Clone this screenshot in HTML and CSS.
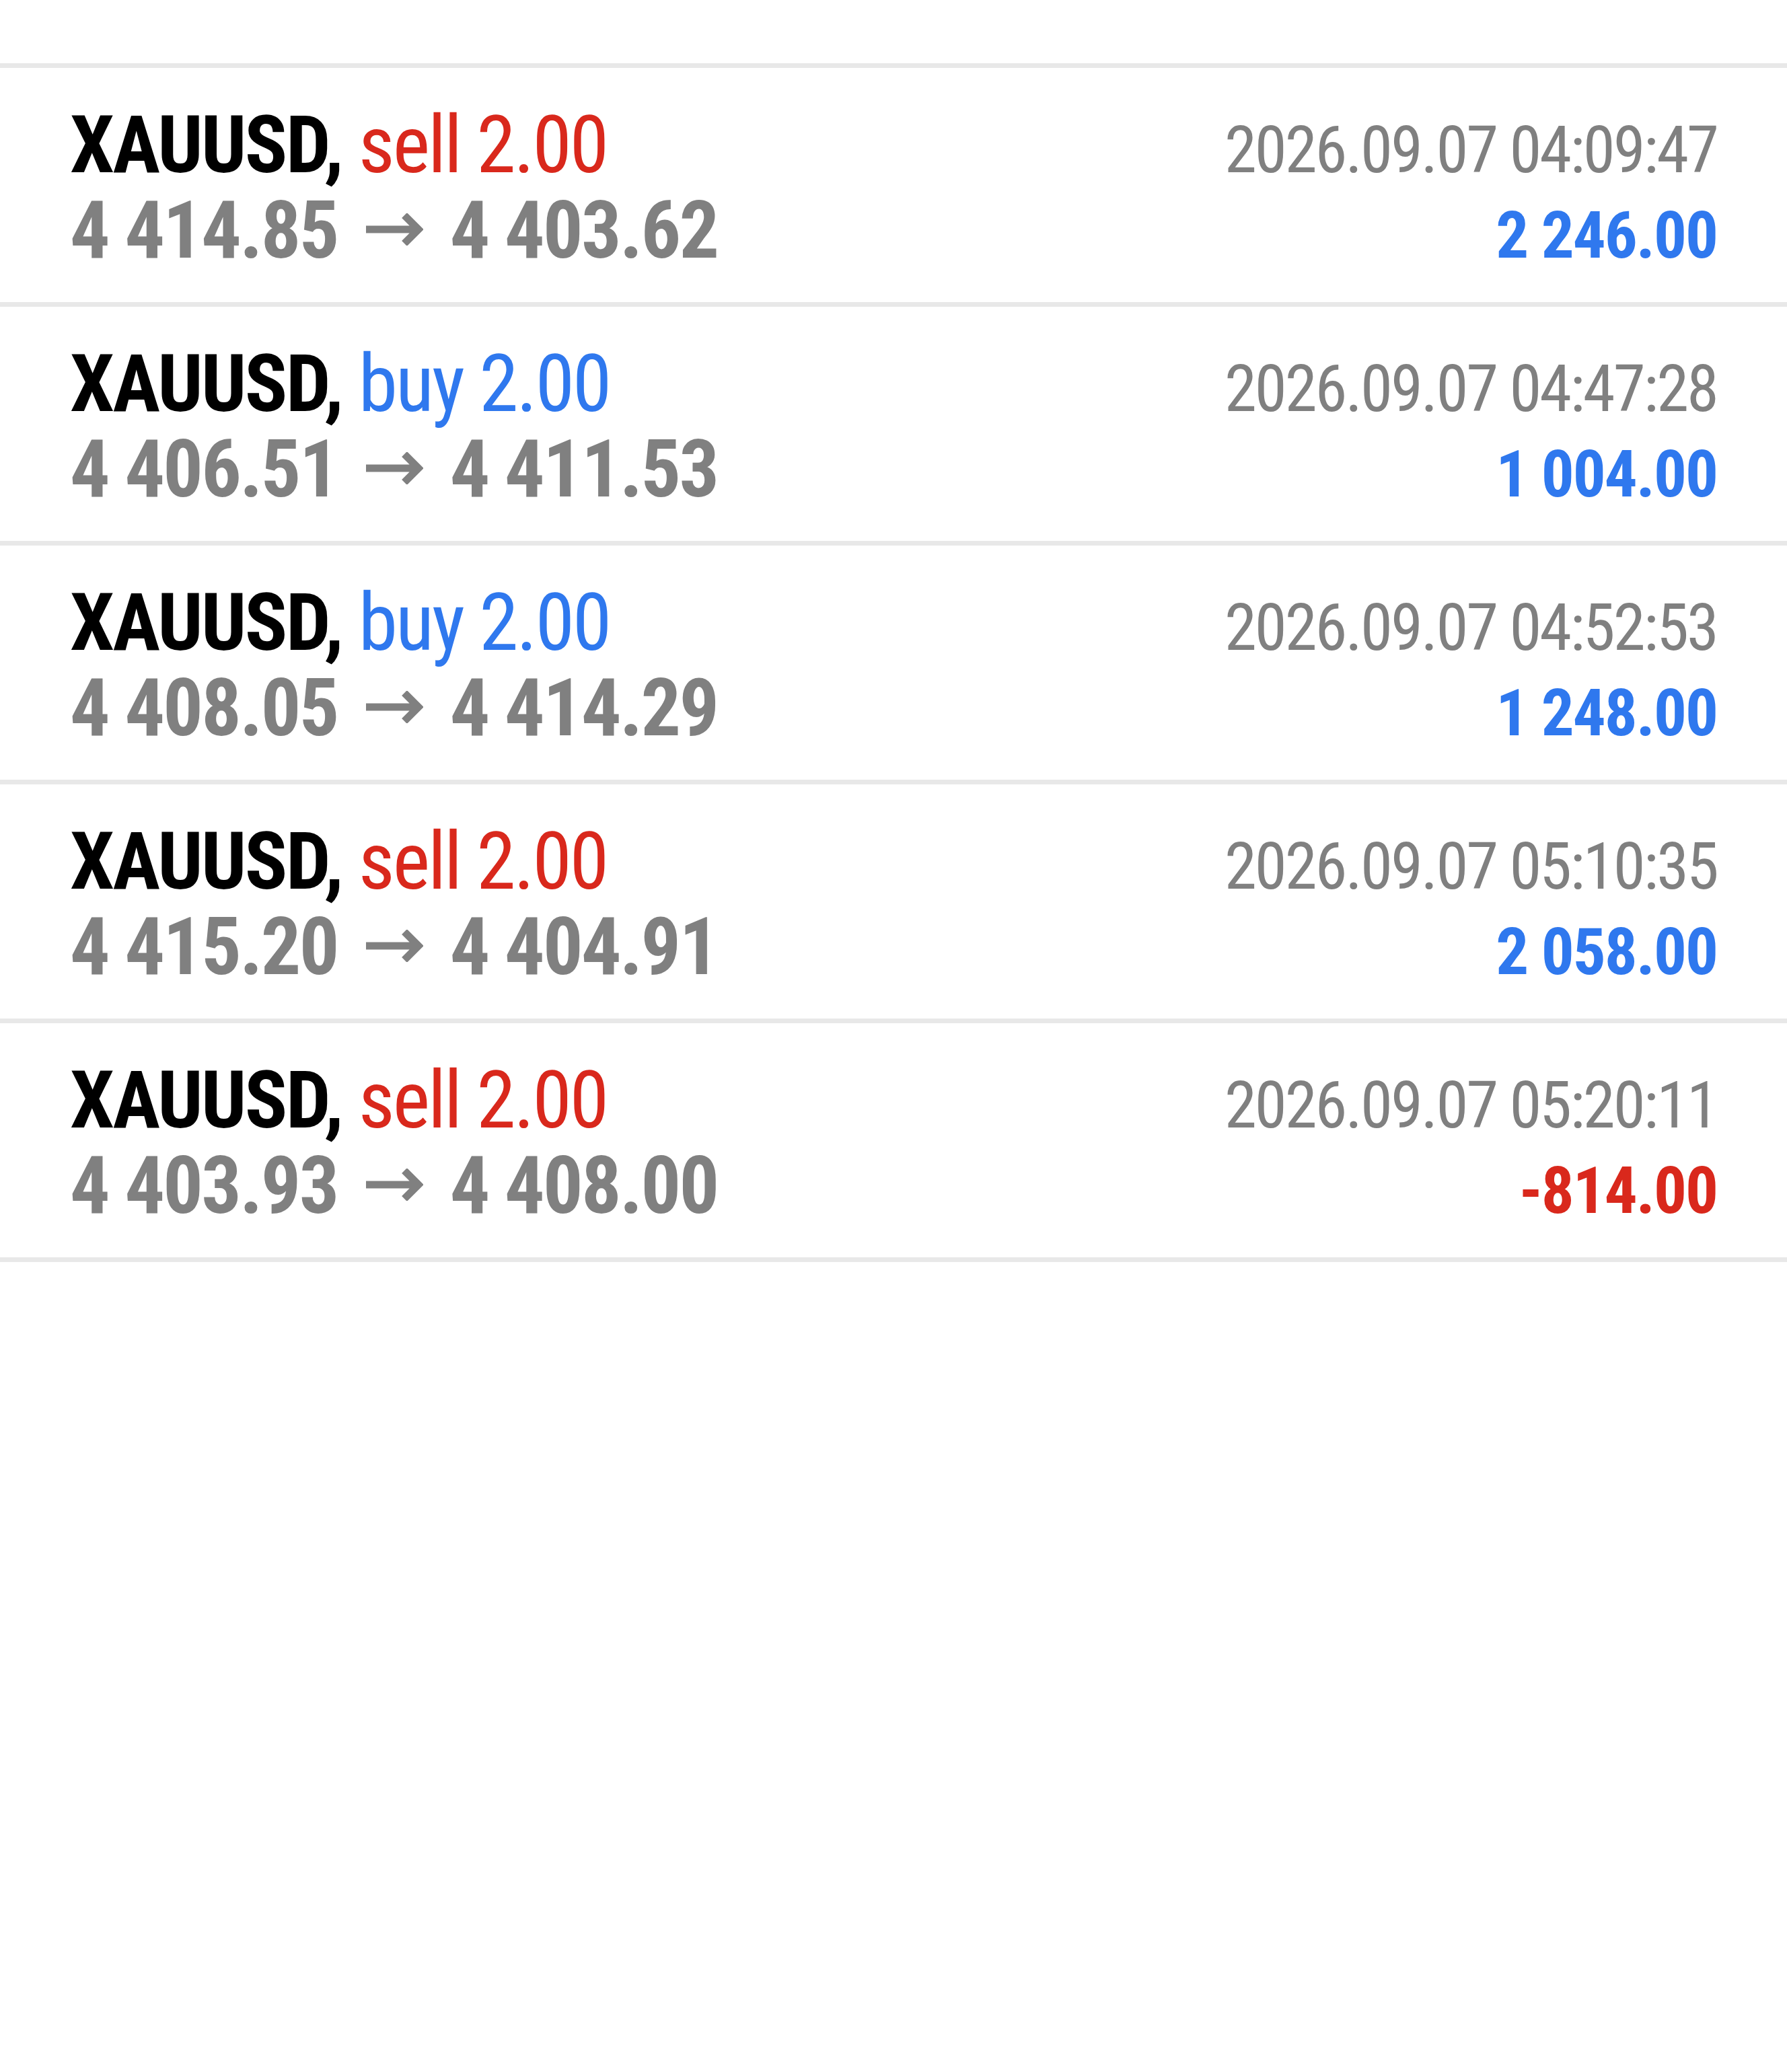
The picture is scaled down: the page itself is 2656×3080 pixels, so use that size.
FILE: index.html
```html
<!DOCTYPE html>
<html lang="en">
<head>
    <meta charset="UTF-8">
    <meta name="viewport" content="width=device-width, initial-scale=1.0">
    <link rel="stylesheet" href="styles.css">
    <title>History</title>
</head>
<body>

<div class="deals">
    <div class="deal">
        <div class="line">
            <span class="title">XAUUSD, <span class="sell">sell 2.00</span></span>
            <span class="time">2026.09.07 04:09:47</span>
        </div>
        <div class="line">
            <span class="prices">4 414.85<svg class="arrow" viewBox="0 0 85 48"><path d="M0 24H78M57 3L78 24L57 45"/></svg>4 403.62</span>
            <span class="profit">2 246.00</span>
        </div>
    </div>

    <div class="deal">
        <div class="line">
            <span class="title">XAUUSD, <span class="buy">buy 2.00</span></span>
            <span class="time">2026.09.07 04:47:28</span>
        </div>
        <div class="line">
            <span class="prices">4 406.51<svg class="arrow" viewBox="0 0 85 48"><path d="M0 24H78M57 3L78 24L57 45"/></svg>4 411.53</span>
            <span class="profit">1 004.00</span>
        </div>
    </div>

    <div class="deal">
        <div class="line">
            <span class="title">XAUUSD, <span class="buy">buy 2.00</span></span>
            <span class="time">2026.09.07 04:52:53</span>
        </div>
        <div class="line">
            <span class="prices">4 408.05<svg class="arrow" viewBox="0 0 85 48"><path d="M0 24H78M57 3L78 24L57 45"/></svg>4 414.29</span>
            <span class="profit">1 248.00</span>
        </div>
    </div>

    <div class="deal">
        <div class="line">
            <span class="title">XAUUSD, <span class="sell">sell 2.00</span></span>
            <span class="time">2026.09.07 05:10:35</span>
        </div>
        <div class="line">
            <span class="prices">4 415.20<svg class="arrow" viewBox="0 0 85 48"><path d="M0 24H78M57 3L78 24L57 45"/></svg>4 404.91</span>
            <span class="profit">2 058.00</span>
        </div>
    </div>

    <div class="deal">
        <div class="line">
            <span class="title">XAUUSD, <span class="sell">sell 2.00</span></span>
            <span class="time">2026.09.07 05:20:11</span>
        </div>
        <div class="line">
            <span class="prices">4 403.93<svg class="arrow" viewBox="0 0 85 48"><path d="M0 24H78M57 3L78 24L57 45"/></svg>4 408.00</span>
            <span class="profit loss">-814.00</span>
        </div>
    </div>
</div>

</body>
</html>
```

FILE: styles.css
```css
body {
    margin: 0;
    padding: 0;
    background: #fff;
    font-family: "Roboto Condensed", Roboto, "Liberation Sans", sans-serif;
}

.deals {
    padding-top: 94px;
}

.deal {
    border-top: 7px solid #e8e8e8;
    padding: 52px 104px 42px 104px;
}

.deal:last-child {
    border-bottom: 7px solid #e8e8e8;
}

.line {
    display: flex;
    justify-content: space-between;
    align-items: baseline;
    height: 127px;
    line-height: 127px;
}

.title {
    font-size: 118px;
    font-weight: 700;
    letter-spacing: -2.6px;
    color: #000;
}

.sell,
.buy {
    font-weight: 400;
    letter-spacing: -3px;
}

.sell {
    color: #d9281c;
}

.buy {
    color: #2f78ee;
}

.prices {
    font-size: 118px;
    font-weight: 700;
    letter-spacing: -2.7px;
    color: #808080;
}

.arrow {
    width: 85px;
    height: 48px;
    margin: 0 40px 0 42px;
    vertical-align: 18px;
    fill: none;
    stroke: #808080;
    stroke-width: 11;
}

.time {
    font-size: 97px;
    line-height: 97px;
    letter-spacing: -3px;
    color: #808080;
}

.profit {
    font-size: 97px;
    line-height: 97px;
    font-weight: 700;
    letter-spacing: -2px;
    color: #2f78ee;
}

.profit.loss {
    color: #d9281c;
}
```
